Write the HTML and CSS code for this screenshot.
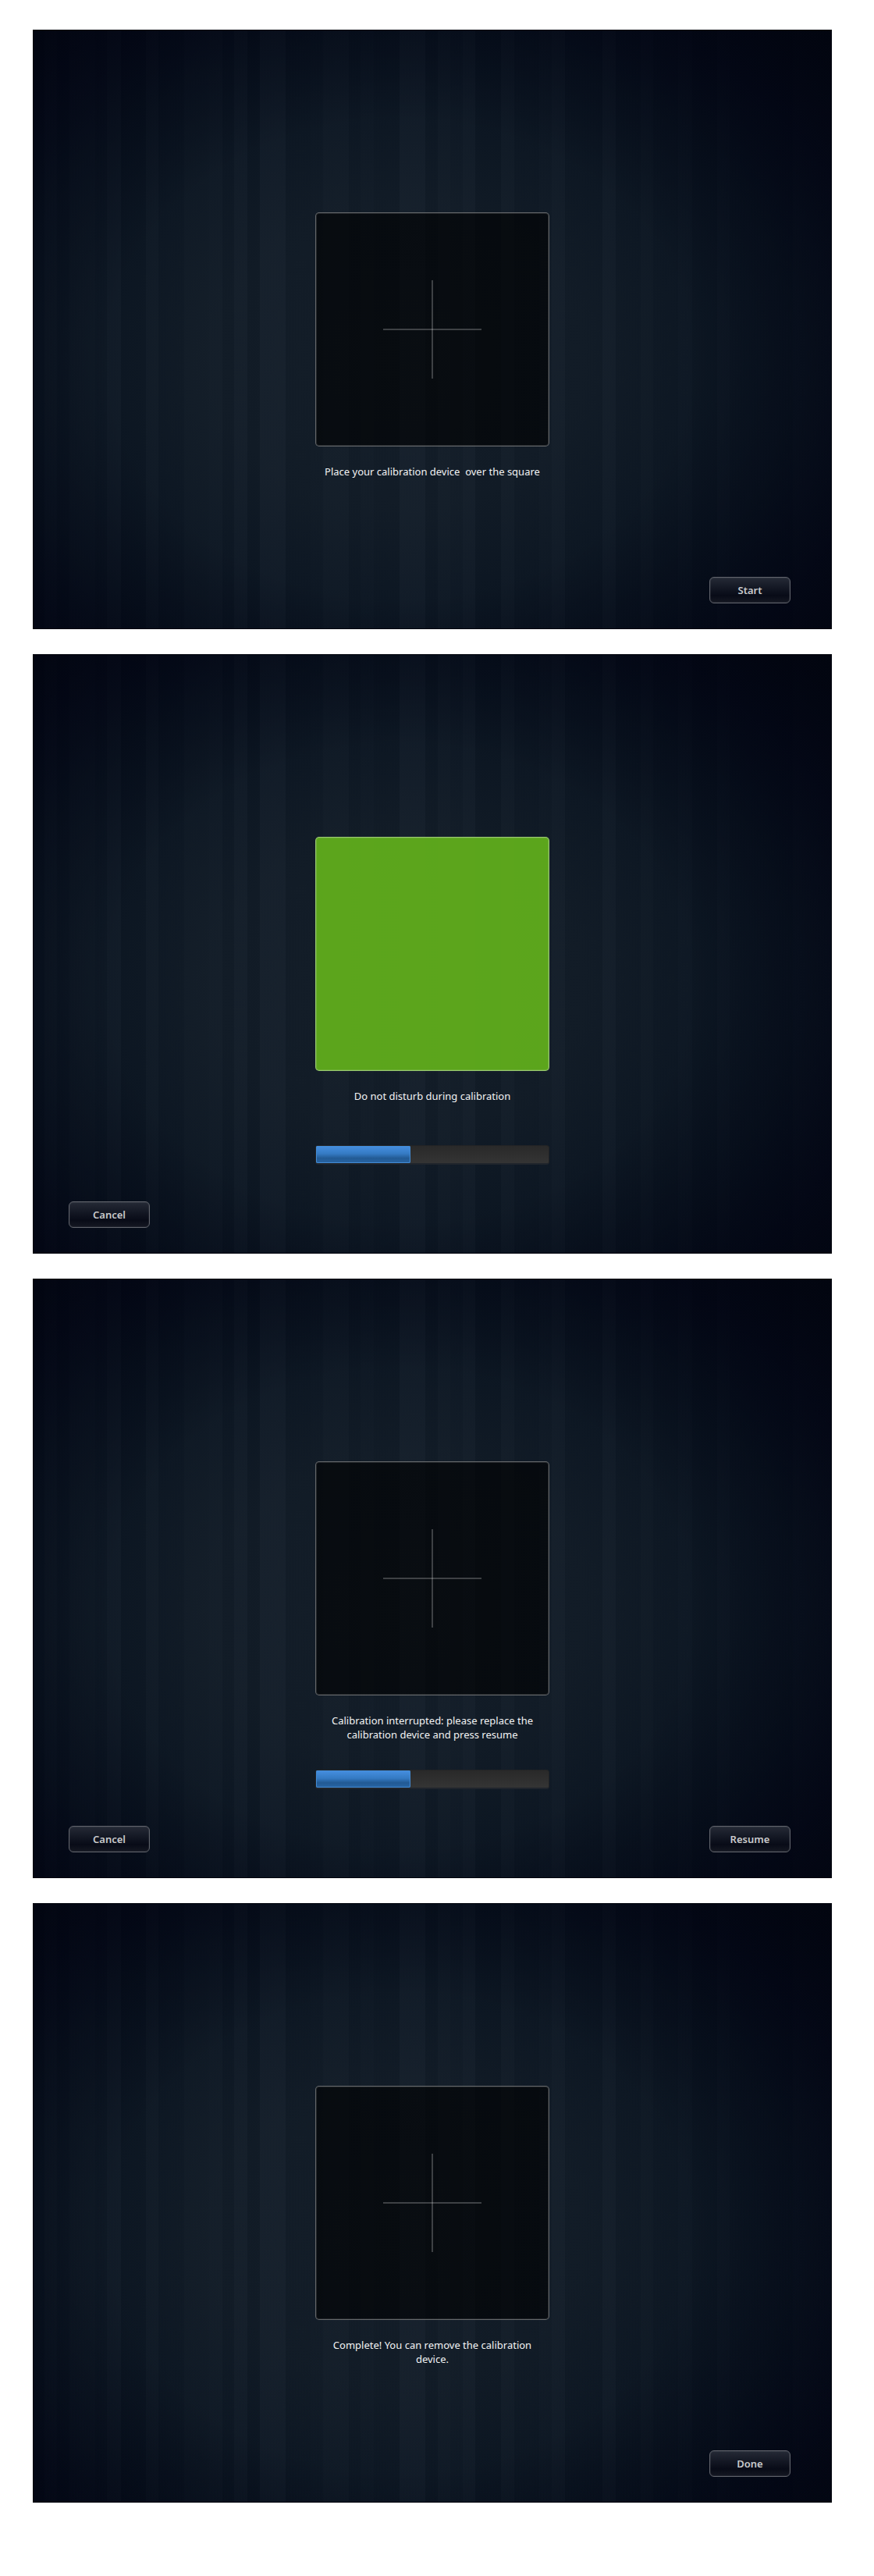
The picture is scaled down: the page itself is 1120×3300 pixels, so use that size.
FILE: index.html
```
<!DOCTYPE html>
<html lang="en">
<head>
<meta charset="utf-8">
<meta name="viewport" content="width=device-width, initial-scale=1">
<title>Display calibration</title>
<link rel="stylesheet" href="styles.css">
</head>
<body>
<main class="screens">
  <section class="screen">
    <div class="stage">
      <div class="target"><span class="cross"></span></div>
      <p class="message">Place your calibration device &nbsp;over the square</p>
    </div>
    <div class="actions"><button type="button" class="button forward">Start</button></div>
  </section>
  <section class="screen">
    <div class="stage">
      <div class="target target-active"></div>
      <p class="message">Do not disturb during calibration</p>
      <progress class="progress" value="122" max="300" aria-label="Calibration progress"></progress>
    </div>
    <div class="actions"><button type="button" class="button">Cancel</button></div>
  </section>
  <section class="screen">
    <div class="stage">
      <div class="target"><span class="cross"></span></div>
      <p class="message">Calibration interrupted: please replace the calibration device and press resume</p>
      <progress class="progress" value="122" max="300" aria-label="Calibration progress"></progress>
    </div>
    <div class="actions"><button type="button" class="button">Cancel</button><button type="button" class="button forward">Resume</button></div>
  </section>
  <section class="screen">
    <div class="stage">
      <div class="target"><span class="cross"></span></div>
      <p class="message">Complete! You can remove the calibration device.</p>
    </div>
    <div class="actions"><button type="button" class="button forward">Done</button></div>
  </section>
</main>
</body>
</html>
```
FILE: styles.css
```
* { box-sizing: border-box; }

body {
  margin: 0;
  background: #fff;
  font: 13px/18px "Noto Sans", "Open Sans", sans-serif;
}

.screens {
  display: flex;
  flex-direction: column;
  gap: 32px;
  padding: 38px 54px 38px 42px;
}

/* Dark vignette with faint vertical curtains */
.screen {
  display: flex;
  flex-direction: column;
  aspect-ratio: 4 / 3;
  background:
    radial-gradient(ellipse 66% 72% at 46% 55%,
      rgba(1,4,16,0) 55%, rgba(1,4,16,.5) 88%, rgba(1,4,14,.8) 112%),
    linear-gradient(90deg,
      rgba(210,225,255,0) 0 15px, rgba(210,225,255,.014) 15px 31px,
      rgba(210,225,255,.003) 31px 47px, rgba(210,225,255,.015) 47px 80px,
      rgba(210,225,255,.006) 80px 95px, rgba(210,225,255,.022) 95px 113px,
      rgba(210,225,255,0) 113px 145px, rgba(210,225,255,.02) 145px 161px,
      rgba(210,225,255,.004) 161px 194px, rgba(210,225,255,.014) 194px 226px,
      rgba(210,225,255,.02) 226px 243px, rgba(210,225,255,.002) 243px 258px,
      rgba(210,225,255,.022) 258px 275px, rgba(210,225,255,0) 275px 291px,
      rgba(210,225,255,.028) 291px 324px, rgba(210,225,255,.002) 324px 356px,
      rgba(210,225,255,.008) 356px 372px, rgba(210,225,255,.018) 372px 405px,
      rgba(210,225,255,.004) 405px 420px, rgba(210,225,255,.012) 420px 437px,
      rgba(210,225,255,.002) 437px 470px, rgba(210,225,255,.026) 470px 503px,
      rgba(210,225,255,.002) 503px 519px, rgba(210,225,255,.02) 519px 535px,
      rgba(210,225,255,.012) 535px 551px, rgba(210,225,255,.024) 551px 567px,
      rgba(210,225,255,0) 567px 600px, rgba(210,225,255,.02) 600px 617px,
      rgba(210,225,255,.004) 617px 649px, rgba(210,225,255,.012) 649px 665px,
      rgba(210,225,255,.022) 665px 682px, rgba(210,225,255,.004) 682px 730px,
      rgba(210,225,255,.022) 730px 747px, rgba(210,225,255,.002) 747px 779px,
      rgba(210,225,255,.014) 779px 795px, rgba(210,225,255,.002) 795px 827px,
      rgba(210,225,255,.012) 827px 845px, rgba(210,225,255,0) 845px 877px,
      rgba(210,225,255,.01) 877px 893px, rgba(210,225,255,.004) 893px 974px,
      rgba(210,225,255,.01) 974px),
    radial-gradient(ellipse 66% 72% at 46% 55%,
      #131d28 0%, #111b26 35%, #0c1622 58%, #08111e 76%, #050a1a 92%, #020510 120%);
  box-shadow: inset 0 0 0 1px #01040c;
}

.stage {
  display: flex;
  flex-direction: column;
  align-self: center;
  width: 300px;
  padding-top: 234px;
}

.target {
  display: grid;
  place-items: center;
  aspect-ratio: 1;
  border: 1px solid rgba(255, 255, 255, .38);
  border-radius: 5px;
  background: rgba(0, 0, 0, .6);
  box-shadow: inset 0 0 0 1px rgba(255, 255, 255, .1);
}

.target-active { background: rgba(96, 173, 27, .95); }

.cross {
  width: 126px;
  height: 126px;
  background:
    linear-gradient(rgba(255, 255, 255, .22) 0 0) center / 2px 100% no-repeat,
    linear-gradient(rgba(255, 255, 255, .22) 0 0) center / 100% 2px no-repeat;
}

.message {
  min-height: 36px;
  margin: 23px 0 36px;
  padding: 0 8px;
  color: #f2f3f4;
  text-align: center;
}

.progress {
  display: block;
  appearance: none;
  width: 100%;
  height: 25px;
  border: 0;
  border-radius: 3px;
  overflow: hidden;
}

.progress::-webkit-progress-bar {
  border: 1px solid #222325;
  border-bottom: 2px solid #20252c;
  border-radius: 3px;
  background: linear-gradient(#292929, #343434);
}

.progress::-webkit-progress-value {
  border-radius: 2px;
  background: linear-gradient(#468fe0, #357bc4 45%, #225a94 72%, #2865a5);
  box-shadow: inset 0 0 0 1px #438bd4;
}

.actions {
  display: flex;
  margin-top: auto;
  padding: 0 53px 33px 46px;
}

.button {
  width: 104px;
  height: 34px;
  padding: 0;
  border: 1px solid #60636b;
  border-radius: 6px;
  background: linear-gradient(#252a36, #141824 40%, #080b17 72%, #151822);
  box-shadow: inset 0 0 0 1px rgba(255, 255, 255, .06);
  color: #c9cacc;
  font: 600 13px/18px "Noto Sans", "Open Sans", sans-serif;
}

.forward { margin-left: auto; }
```
